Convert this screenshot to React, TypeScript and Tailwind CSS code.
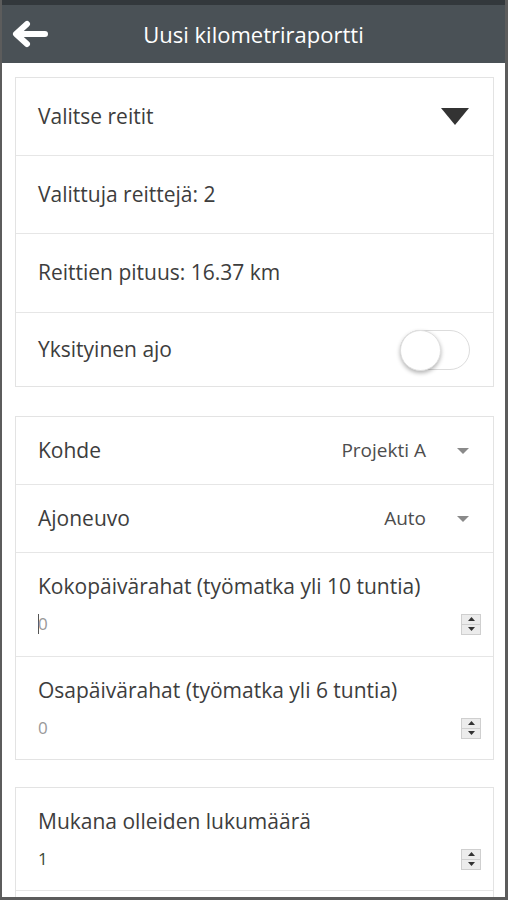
import React from "react";

const font = { fontFamily: '"Open Sans", "Noto Sans", Arial, sans-serif' };

function Spinner() {
  return (
    <div className="flex h-[21px] w-[20px] flex-col border border-[#cfcfcf] bg-[#ececec]">
      <div className="flex flex-1 items-center justify-center border-b border-[#cfcfcf]">
        <svg width="7" height="4" viewBox="0 0 7 4"><path d="M0 4 L3.5 0 L7 4 Z" fill="#333" /></svg>
      </div>
      <div className="flex flex-1 items-center justify-center">
        <svg width="7" height="4" viewBox="0 0 7 4"><path d="M0 0 L3.5 4 L7 0 Z" fill="#333" /></svg>
      </div>
    </div>
  );
}

function SmallCaret() {
  return (
    <svg width="12" height="6" viewBox="0 0 12 6" className="ml-[31px]">
      <path d="M0 0 L12 0 L6 6 Z" fill="#8a8a8a" />
    </svg>
  );
}

function NumberRow({ label, value, focused, valueColor, height, last }: { label: string; value: string; focused?: boolean; valueColor: string; height: string; last?: boolean }) {
  return (
    <div className={`flex flex-col ${height} ${last ? "" : "border-b border-[#e6e6e6]"} pl-[22px] pr-[12px] pt-[20px]`}>
      <div className="text-[21px] leading-[26px] text-[#3d3d3d]">{label}</div>
      <div className="mt-[14px] flex items-center justify-between">
        <div className={`flex items-center text-[17px] leading-[22px] ${valueColor}`}>
          {focused && <span className="mr-[-1px] inline-block h-[20px] w-[1px] bg-[#555]" />}
          {value}
        </div>
        <Spinner />
      </div>
    </div>
  );
}

export default function App() {
  return (
    <div style={font} className="h-[900px] w-[508px] overflow-hidden border-b-[3px] border-l-2 border-r-[3px] border-[#5c5c5c] bg-white">
      {/* Header */}
      <div className="flex h-[63px] items-center border-t-[5px] border-[#33383c] bg-[#4a5156]">
        <div className="flex w-[60px] items-center pl-[10px]">
          <svg width="36" height="28" viewBox="0 0 36 28">
            <path d="M33 14 H6 M15 4 L4 14 L15 24" stroke="#fff" strokeWidth="6" strokeLinecap="round" strokeLinejoin="round" fill="none" />
          </svg>
        </div>
        <div className="flex-1 text-center text-[22px] text-white">Uusi kilometriraportti</div>
        <div className="w-[60px]" />
      </div>

      <div className="flex flex-col pl-[13px] pr-[11px]">
        {/* Card 1 */}
        <div className="mt-[14px] border border-[#e3e3e3]">
          <div className="flex h-[78px] items-center justify-between border-b border-[#e6e6e6] pl-[22px] pr-[24px]">
            <span className="text-[21px] text-[#3d3d3d]">Valitse reitit</span>
            <svg width="28" height="17" viewBox="0 0 28 17"><path d="M0 0 H28 L14 17 Z" fill="#333" /></svg>
          </div>
          <div className="flex h-[78px] items-center border-b border-[#e6e6e6] pl-[22px]">
            <span className="text-[21px] text-[#3d3d3d]">Valittuja reittejä: 2</span>
          </div>
          <div className="flex h-[79px] items-center border-b border-[#e6e6e6] pl-[22px]">
            <span className="text-[21px] text-[#3d3d3d]">Reittien pituus: 16.37 km</span>
          </div>
          <div className="flex h-[73px] items-center justify-between pl-[22px] pr-[23px]">
            <span className="text-[21px] text-[#3d3d3d]">Yksityinen ajo</span>
            <div className="relative h-[40px] w-[70px] rounded-full border border-[#dcdcdc] bg-white">
              <div className="absolute left-[-1px] top-[-1px] h-[41px] w-[41px] rounded-full border border-[#e0e0e0] bg-white shadow-[0_2px_4px_rgba(0,0,0,0.3)]" />
            </div>
          </div>
        </div>

        {/* Card 2 */}
        <div className="mt-[29px] border border-[#e3e3e3]">
          <div className="flex h-[68px] items-center justify-between border-b border-[#e6e6e6] pl-[22px] pr-[24px]">
            <span className="text-[21px] text-[#3d3d3d]">Kohde</span>
            <div className="flex items-center">
              <span className="text-[19px] text-[#4d4d4d]">Projekti A</span>
              <SmallCaret />
            </div>
          </div>
          <div className="flex h-[68px] items-center justify-between border-b border-[#e6e6e6] pl-[22px] pr-[24px]">
            <span className="text-[21px] text-[#3d3d3d]">Ajoneuvo</span>
            <div className="flex items-center">
              <span className="text-[19px] text-[#4d4d4d]">Auto</span>
              <SmallCaret />
            </div>
          </div>
          <NumberRow label="Kokopäivärahat (työmatka yli 10 tuntia)" value="0" focused valueColor="text-[#999]" height="h-[104px]" />
          <NumberRow label="Osapäivärahat (työmatka yli 6 tuntia)" value="0" valueColor="text-[#999]" height="h-[102px]" last />
        </div>

        {/* Card 3 */}
        <div className="mt-[27px] border border-[#e3e3e3]">
          <NumberRow label="Mukana olleiden lukumäärä" value="1" valueColor="text-[#3f4a3a]" height="h-[103px]" />
          <div className="h-[60px]" />
        </div>
      </div>
    </div>
  );
}
